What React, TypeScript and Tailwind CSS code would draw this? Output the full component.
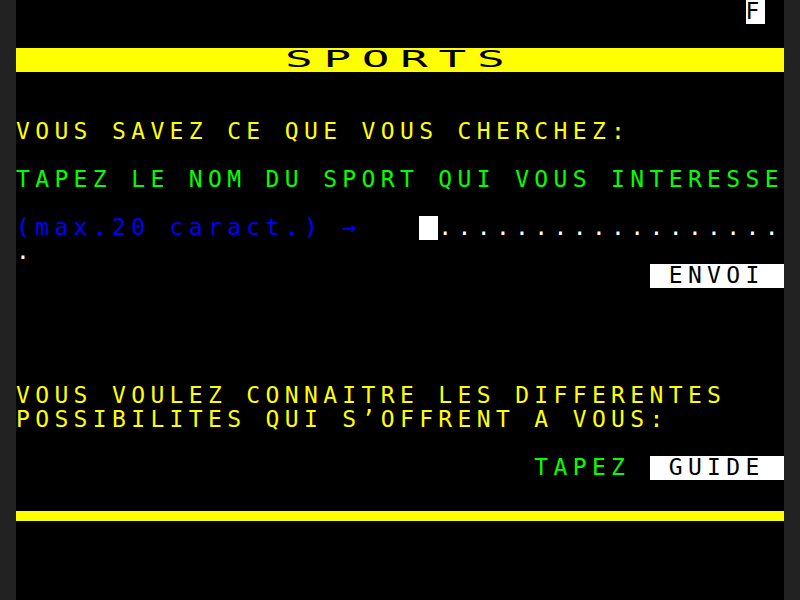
import React from 'react'

// Minitel style screen: 40 columns x 25 rows, each cell 19.2 x 24 px
const Row: React.FC<{ children?: React.ReactNode }> = ({ children }) => (
  <div className="flex h-[24px] whitespace-pre">{children}</div>
)

const Seg: React.FC<{ text: string; className?: string }> = ({ text, className = '' }) => (
  <span className={`block h-[24px] leading-[22.4px] ${className}`}>{text}</span>
)

const App: React.FC = () => {
  return (
    <div className="flex h-[600px] w-[800px] justify-center bg-[#222222]">
      <div className="flex h-[600px] w-[768px] flex-col bg-black font-['DejaVu_Sans_Mono',monospace] text-[23px] leading-[24px] tracking-[5.35px]">
        {/* row 0 */}
        <Row>
          <Seg text={' '.repeat(38)} />
          <Seg text="F" className="bg-white text-black" />
        </Row>
        <Row />
        {/* row 2: title bar, double width */}
        <Row>
          <div className="flex h-[24px] w-full bg-[#ffff00] text-black">
            <Seg text={' '.repeat(14)} />
            <span className="block h-[24px] w-[230.4px]">
              <span className="block h-[24px] origin-left scale-x-[2] leading-[22.4px]">SPORTS</span>
            </span>
          </div>
        </Row>
        <Row />
        <Row />
        {/* row 5 */}
        <Row>
          <Seg text="VOUS SAVEZ CE QUE VOUS CHERCHEZ:" className="text-[#ffff00]" />
        </Row>
        <Row />
        {/* row 7 */}
        <Row>
          <Seg text="TAPEZ LE NOM DU SPORT QUI VOUS INTERESSE" className="text-[#00ff00]" />
        </Row>
        <Row />
        {/* row 9: input field */}
        <Row>
          <Seg text="(max.20 caract.) →   " className="text-[#0000ff]" />
          <span className="block h-[24px] w-[19.2px] bg-white" />
          <Seg text={'.'.repeat(18)} className="text-white" />
        </Row>
        <Row>
          <Seg text="." className="text-white" />
        </Row>
        {/* row 11 */}
        <Row>
          <Seg text={' '.repeat(33)} />
          <Seg text=" ENVOI " className="bg-white text-black" />
        </Row>
        <Row />
        <Row />
        <Row />
        <Row />
        {/* rows 16-17 */}
        <Row>
          <Seg text="VOUS VOULEZ CONNAITRE LES DIFFERENTES" className="text-[#ffff00]" />
        </Row>
        <Row>
          <Seg text="POSSIBILITES QUI S’OFFRENT A VOUS:" className="text-[#ffff00]" />
        </Row>
        <Row />
        {/* row 19 */}
        <Row>
          <Seg text={' '.repeat(27)} />
          <Seg text="TAPEZ " className="text-[#00ff00]" />
          <Seg text=" GUIDE " className="bg-white text-black" />
        </Row>
        <Row />
        {/* row 21: mosaic separator */}
        <Row>
          <div className="flex h-[24px] w-full flex-col">
            <div className="h-[7.2px]" />
            <div className="h-[9.6px] bg-[#ffff00]" />
          </div>
        </Row>
        <Row />
        <Row />
        <Row />
      </div>
    </div>
  )
}

export default App
